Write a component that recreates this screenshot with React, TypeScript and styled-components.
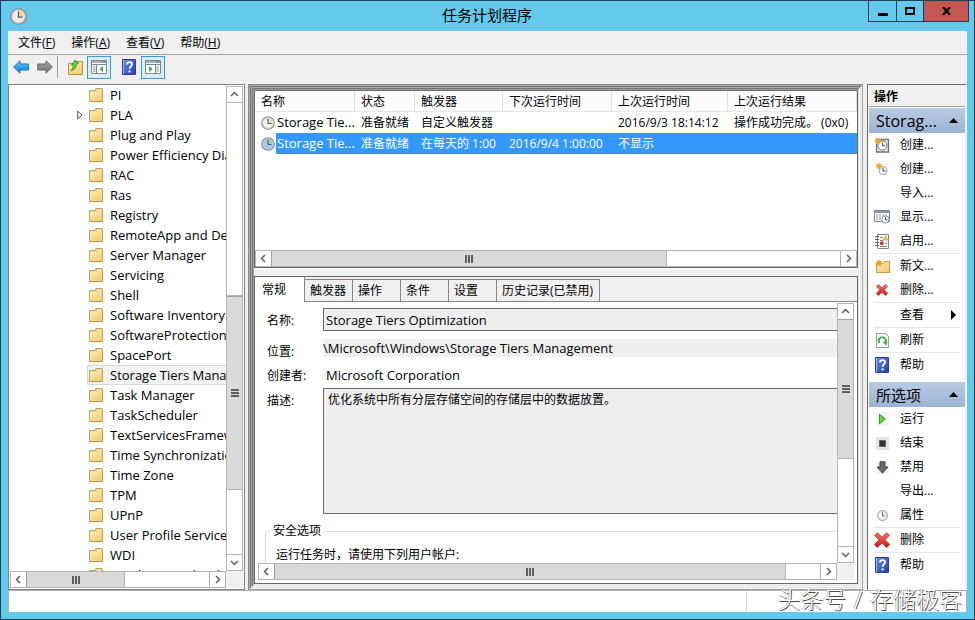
import React from "react";
import styled, { createGlobalStyle, css } from "styled-components";

const GlobalStyle = createGlobalStyle`
  *, *::before, *::after { box-sizing: border-box; }
  body {
    margin: 0;
    color: #000;
    font: 12px/18px "Open Sans", "Noto Sans CJK SC", sans-serif;
  }
  button, input, textarea { font: inherit; color: inherit; margin: 0; padding: 0; border: 0; border-radius: 0; background: none; }
  ul { list-style: none; margin: 0; padding: 0; }
  svg { display: block; flex: none; }
`;

/* ---------- window ---------- */

const Window = styled.div`
  position: relative;
  display: flex;
  flex-direction: column;
  height: 100vh;
  min-height: 480px;
  padding: 0 7px 7px;
  border: 1px solid #1f4058;
  background: #64c9ea;
  overflow: hidden;
`;

const TitleBar = styled.header`
  display: grid;
  grid-template-columns: 100px 1fr 100px;
  flex: none;
  height: 30px;
  align-items: center;
  margin-right: -2px;
`;

const TitleIcon = styled.span`
  padding-left: 2px;
`;

const Title = styled.h1`
  margin: 0;
  padding-right: 3px;
  text-align: center;
  font-size: 15px;
  line-height: 26px;
  height: 28px;
  font-weight: 400;
`;

const CaptionButtons = styled.div`
  display: flex;
  align-self: start;
  justify-self: end;
  border: 1px solid #1f4058;
  border-top: 0;
`;

const CaptionButton = styled.button<{ $close?: boolean }>`
  display: flex;
  align-items: center;
  justify-content: center;
  width: ${(p) => (p.$close ? 45 : 27)}px;
  height: 20px;
  background: ${(p) => (p.$close ? "#c4574f" : "transparent")};
  & + & { border-left: 1px solid #1f4058; }
`;

const Client = styled.div`
  display: flex;
  flex-direction: column;
  flex: 1;
  min-height: 0;
  background: #f0f0f0;
`;

const MenuBar = styled.nav`
  display: flex;
  flex: none;
  height: 24px;
  padding-left: 2px;
  border-bottom: 1px solid #a8a8a8;
`;

const MenuItem = styled.button`
  padding: 1px 8px 0;
  line-height: 22px;
`;

const ToolBar = styled.div`
  display: flex;
  flex: none;
  align-items: center;
  height: 29px;
  padding: 0 0 5px 1px;
`;

const ToolButton = styled.button<{ $on?: boolean }>`
  display: flex;
  align-items: center;
  justify-content: center;
  width: 24px;
  height: 23px;
  ${(p) => p.$on && css`border: 1px solid #3a9bdc; background: #dcedfa;`}
`;

const ToolDivider = styled.span<{ $hidden?: boolean }>`
  width: 1px;
  height: 22px;
  margin: 0 5px 0 0;
  background: ${(p) => (p.$hidden ? "transparent" : "#a0a0a0")};
`;

const Main = styled.main`
  display: flex;
  flex: 1;
  min-height: 0;
`;

/* ---------- scroll bars ---------- */

const Bar = styled.div<{ $v?: boolean }>`
  display: flex;
  flex: none;
  flex-direction: ${(p) => (p.$v ? "column" : "row")};
  ${(p) => (p.$v ? "width: 17px;" : "height: 17px;")}
  background: #fff;
  border: 1px solid #b4b4b4;
`;

const BarButton = styled.button`
  display: flex;
  flex: none;
  align-items: center;
  justify-content: center;
  width: 15px;
  height: 15px;
`;

const BarSpace = styled.span<{ $grow: number; $v?: boolean }>`
  flex: ${(p) => p.$grow} 1 0;
  border: 0 solid #b4b4b4;
  ${(p) => p.$grow > 0 && (p.$v ? "border-width: 1px 0;" : "border-width: 0 1px;")}
`;

const BarThumb = styled.span<{ $grow: number; $v?: boolean }>`
  display: flex;
  flex: ${(p) => p.$grow} 1 0;
  align-items: center;
  justify-content: center;
  background: #dadada;
  border: 0 solid #a0a0a0;
  border-width: ${(p) => (p.$v ? "1px 0 0" : "0 0 0 1px")};
`;

const chevrons = {
  up: "M1 6 4.5 2.5 8 6",
  down: "M1 3 4.5 6.5 8 3",
  left: "M6 1 2.5 4.5 6 8",
  right: "M3 1 6.5 4.5 3 8",
};

function Chevron({ dir }: { dir: keyof typeof chevrons }) {
  return (
    <svg width="9" height="9" viewBox="0 0 9 9">
      <path d={chevrons[dir]} fill="none" stroke="#606060" strokeWidth="1.5" />
    </svg>
  );
}

type ScrollProps = { vertical?: boolean; before: number; thumb: number; after: number };

function ScrollBar({ vertical, before, thumb, after }: ScrollProps) {
  return (
    <Bar $v={vertical}>
      <BarButton aria-label={vertical ? "向上滚动" : "向左滚动"}>
        <Chevron dir={vertical ? "up" : "left"} />
      </BarButton>
      <BarSpace $grow={before} $v={vertical} />
      <BarThumb $grow={thumb} $v={vertical}>
        <svg width="8" height="8" viewBox="0 0 8 8">
          <path
            d={vertical ? "M0 1H8M0 4H8M0 7H8" : "M1 0V8M4 0V8M7 0V8"}
            stroke="#606060"
            strokeWidth="2"
          />
        </svg>
      </BarThumb>
      <BarSpace $grow={after} $v={vertical} />
      <BarButton aria-label={vertical ? "向下滚动" : "向右滚动"}>
        <Chevron dir={vertical ? "down" : "right"} />
      </BarButton>
    </Bar>
  );
}

/* ---------- tree ---------- */

const TreePane = styled.section`
  display: grid;
  grid-template: minmax(0, 1fr) 17px / minmax(0, 1fr) 17px;
  flex: none;
  width: 237px;
  padding: 0 1px 1px;
  border: 1px solid #808080;
  background: #fff;
  margin-right: 3px;
`;

const TreeView = styled.ul`
  overflow: hidden;
`;

const BarFrame = styled.div`
  display: grid;
  padding-top: 1px;
`;

const Corner = styled.span`
  background: #f0f0f0;
`;

const TreeRow = styled.li`
  display: flex;
  align-items: center;
  height: 20px;
  padding-left: 67px;
`;

const Expander = styled.span`
  display: flex;
  flex: none;
  width: 10px;
`;

const TreeNode = styled.button<{ $selected?: boolean }>`
  display: flex;
  flex: 1 0 auto;
  align-items: center;
  gap: 7px;
  height: 20px;
  padding-left: 1px;
  border: 1px solid transparent;
  font-size: 13px;
  white-space: nowrap;
  ${(p) => p.$selected && css`border-color: #d9d9d9; background: #f2f2f2;`}
`;

/* ---------- centre ---------- */

const CentreFrame = styled.section`
  display: flex;
  flex: 1;
  flex-direction: column;
  min-width: 0;
  padding: 6px 5px 6px 6px;
  background: #f0f0f0;
  box-shadow:
    inset 1px 1px #8c8c8c, inset -1px -1px #a0a0a0,
    inset 2px 2px #a8a8a8, inset -2px -2px #fafafa,
    inset 3px 3px #757575, inset -3px -3px #e0e0e0,
    inset 4px 4px #a8a8a8, inset -4px -4px #fafafa,
    inset 5px 5px #757575, inset -5px -5px #e0e0e0,
    inset 6px 6px #a0a0a0;
  margin-right: 4px;
`;

const ListPane = styled.div`
  display: flex;
  flex: none;
  flex-direction: column;
  height: 178px;
  border: 1px solid #696969;
  background: #fff;
`;

const ListBody = styled.div`
  flex: 1;
  overflow: hidden;
`;

const Table = styled.table`
  width: 100%;
  table-layout: fixed;
  border-collapse: separate;
  border-spacing: 0;
  white-space: nowrap;
`;

const Th = styled.th<{ $w?: number }>`
  width: ${(p) => (p.$w ? p.$w + "px" : "auto")};
  height: 21px;
  padding: 1px 0 0 6px;
  border-right: 1px solid #dedede;
  border-bottom: 1px solid #e8e8e8;
  background: #fcfcfc;
  font-weight: 400;
  text-align: left;
`;

const Tr = styled.tr<{ $selected?: boolean }>`
  --row: ${(p) => (p.$selected ? "#3399ff" : "transparent")};
  --line: ${(p) => (p.$selected ? "#5c83ad" : "transparent")};
  color: ${(p) => (p.$selected ? "#fff" : "#000")};
`;

const Td = styled.td`
  height: 21px;
  padding: 0 0 0 6px;
  overflow: hidden;
  background: var(--row);
  box-shadow: inset 0 -1px var(--line);
`;

const NameTd = styled.td`
  height: 21px;
  padding: 0 0 0 6px;
  font-size: 13px;
`;

const NameCell = styled.span`
  display: flex;
  align-items: center;
`;

const NameText = styled.span`
  flex: 1;
  margin-left: 1px;
  padding-left: 1px;
  line-height: 21px;
  background: var(--row);
  box-shadow: inset 0 -1px var(--line);
`;

const PaneGap = styled.div`
  flex: none;
  height: 8px;
  border-top: 2px solid #fafafa;
`;

const DetailPane = styled.div`
  display: flex;
  flex: 1;
  flex-direction: column;
  min-height: 0;
  border: 1px solid #696969;
  background: #fff;
`;

const TabStrip = styled.div`
  display: flex;
  flex: none;
  align-items: flex-end;
  height: 25px;
  background: #f0f0f0;
  box-shadow: inset 0 -1px #84848c;
`;

const Tab = styled.button<{ $active?: boolean }>`
  min-width: 48px;
  height: ${(p) => (p.$active ? 25 : 23)}px;
  padding: 0 6px 0 5px;
  border: 1px solid #84848c;
  border-left: 0;
  text-align: left;
  white-space: nowrap;
  ${(p) => p.$active && css`
    min-width: 50px;
    padding-left: 7px;
    border-width: 0 1px 0 0;
    background: #fff;
  `}
`;

const DetailGrid = styled.div`
  display: grid;
  grid-template: minmax(0, 1fr) 17px / minmax(0, 1fr) 17px;
  flex: 1;
  min-height: 0;
  padding: 0 3px 3px 3px;
`;

const DetailView = styled.div`
  overflow: hidden;
  margin-left: -3px;
`;

const FormCanvas = styled.div`
  width: calc(100% + 24px);
`;

const FormGrid = styled.div`
  display: grid;
  grid-template-columns: 56px minmax(0, 1fr);
  grid-template-rows: 31px 24px 25px 126px;
  align-items: start;
  padding: 6px 0 0 12px;
`;

const Label = styled.label`
  line-height: 25px;
`;

const NameInput = styled.input`
  height: 23px;
  padding-left: 2px;
  border: 1px solid #696969;
  background: #efefef;
  font-size: 13px;
`;

const PathInput = styled.input`
  height: 18px;
  background: #efefef;
  font-size: 13px;
`;

const Creator = styled.output`
  padding-left: 3px;
  font-size: 13px;
  line-height: 24px;
`;

const Description = styled.textarea`
  height: 126px;
  padding: 2px 4px;
  border: 1px solid #696969;
  background: #efefef;
  resize: none;
`;

const SecurityBox = styled.fieldset`
  min-height: 70px;
  margin: 8px 0 0 10px;
  padding: 6px 0 0 10px;
  border: 1px solid #dcdcdc;
`;

const Legend = styled.legend`
  margin-left: -6px;
  padding: 0 3px;
`;

/* ---------- actions ---------- */

const ActionPane = styled.aside`
  flex: none;
  width: 100px;
  padding-left: 1px;
  border: solid #696969;
  border-width: 1px 0 0 1px;
  border-right: 2px solid #f0f0f0;
  background: #fff;
  overflow: hidden;
`;

const ActionTitle = styled.h2`
  margin: 0 0 1px;
  padding-left: 5px;
  height: 22px;
  border-bottom: 1px solid #a0a0a0;
  background: #f0f0f0;
  font-size: 12px;
  line-height: 23px;
  font-weight: 700;
`;

const GroupHeader = styled.button<{ $han?: boolean }>`
  display: flex;
  align-items: center;
  justify-content: space-between;
  width: 100%;
  height: 25px;
  padding: 0 7px;
  background: linear-gradient(#b9cbe3, #9bb3d4);
  font-size: ${(p) => (p.$han ? 15 : 16)}px;
`;

const ActionList = styled.ul`
  padding: 0 5px;
  & + ${GroupHeader} { margin-top: 5px; }
`;

const ActionItem = styled.li<{ $line?: boolean }>`
  border-top: ${(p) => (p.$line ? "1px solid #e6e6e6" : "0")};
`;

const ActionButton = styled.button`
  display: grid;
  grid-template-columns: 26px 1fr auto;
  align-items: center;
  width: 100%;
  height: 24px;
  text-align: left;
`;

/* ---------- status ---------- */

const StatusBar = styled.footer`
  display: flex;
  flex: none;
  justify-content: flex-end;
  height: 22px;
  border: 1px solid #b0b0b0;
  border-bottom: 0;
  background: #fff;
`;

const StatusCell = styled.span`
  width: 220px;
  border-left: 1px solid #d7d7d7;
`;

const Watermark = styled.div`
  position: absolute;
  right: 12px;
  bottom: 4px;
  display: flex;
  gap: 8px;
  color: #fff;
  font-size: 23px;
  line-height: 32px;
  font-weight: 300;
  white-space: nowrap;
  text-shadow: 1px 1px 0 #4c4c4c, -1px 0 0 #b4b4b4;
`;

/* ---------- icons ---------- */

function Gradients() {
  return (
    <svg width="0" height="0" aria-hidden="true">
      <defs>
        <linearGradient id="g-folder" x1="0" y1="0" x2="1" y2="1">
          <stop offset="0" stopColor="#fdefbd" />
          <stop offset="1" stopColor="#f2c968" />
        </linearGradient>
        <linearGradient id="g-help" x1="0" y1="0" x2="1" y2="1">
          <stop offset="0" stopColor="#6d8fe6" />
          <stop offset="1" stopColor="#2440a8" />
        </linearGradient>
        <linearGradient id="g-back" x1="0" y1="0" x2="0" y2="1">
          <stop offset="0" stopColor="#8fd6fa" />
          <stop offset="0.5" stopColor="#2fa3ec" />
          <stop offset="1" stopColor="#1a7fd0" />
        </linearGradient>
        <linearGradient id="g-dark" x1="0" y1="0" x2="0" y2="1">
          <stop offset="0" stopColor="#a8a8a8" />
          <stop offset="1" stopColor="#6c6c6c" />
        </linearGradient>
        <linearGradient id="g-red" x1="0" y1="0" x2="0" y2="1">
          <stop offset="0" stopColor="#f47a70" />
          <stop offset="1" stopColor="#cf1414" />
        </linearGradient>
      </defs>
    </svg>
  );
}

function Clock({ size = 14, face = "#f3f2ee", wedge = "#f3d9a0" }: { size?: number; face?: string; wedge?: string }) {
  return (
    <svg width={size} height={size} viewBox="0 0 16 16">
      <circle cx="8" cy="8" r="7.2" fill={face} stroke="#85878b" strokeWidth="1.2" />
      <circle cx="8" cy="8" r="5.9" fill="none" stroke="#c9ccd0" strokeWidth="0.9" />
      <path d="M8 8V2.6A5.4 5.4 0 0 1 13.4 8Z" fill={wedge} />
      <path d="M8 3V8.5H12" fill="none" stroke="#4b5a70" strokeWidth="1.2" />
    </svg>
  );
}

function Folder() {
  return (
    <svg width="14" height="14" viewBox="0 0 14 14">
      <path d="M.5 2.5H6L7 .5H13L13.5 1.5V13.5H.5Z" fill="#ecc872" stroke="#bda063" />
      <path d="M8 2H12.5" stroke="#fff8dc" />
      <path d="M1 3.5H7.5L8.5 2.8H13V13H1Z" fill="url(#g-folder)" />
      <path d="M.5 13.5H13.5" stroke="#b8934a" />
    </svg>
  );
}

function BackArrow() {
  return (
    <svg width="16" height="14" viewBox="0 0 16 14">
      <path d="M.7 7 7 .8V4H15.3V10H7V13.2Z" fill="url(#g-back)" stroke="#1d6fb3" />
    </svg>
  );
}

function ForwardArrow() {
  return (
    <svg width="16" height="14" viewBox="0 0 16 14">
      <path d="M15.3 7 9 .8V4H.7V10H9V13.2Z" fill="url(#g-dark)" stroke="#686868" />
    </svg>
  );
}

function FolderUp() {
  return (
    <svg width="15" height="16" viewBox="0 0 15 16">
      <path d="M.5 4.5H7L8.5 2.5H14.5V15.5H.5Z" fill="url(#g-folder)" stroke="#b8923f" />
      <path d="M2.5 12C4 10.5 5.2 8.5 5.2 6.2H3.2L7.2 1 10.8 4.6H8.8C8.6 8.5 6.5 11.5 2.5 12Z" fill="#5cc83c" stroke="#2f8f22" strokeWidth="0.7" />
    </svg>
  );
}

function PanelIcon({ side }: { side: "left" | "right" }) {
  const left = side === "left";
  return (
    <svg width="16" height="14" viewBox="0 0 16 14">
      <path d="M.5.5H15.5V13.5H.5Z" fill="#fff" stroke="#7d8792" />
      <path d="M1 2H15" stroke="#a9b2bc" strokeWidth="2" />
      <path d="M11 1.8H12M13 1.8H14" stroke="#444" />
      <path d="M1 4.5H15" stroke="#7d8792" />
      {left ? (
        <>
          <path d="M5.5 5V13M2 7H4.5M2 9H4.5M2 11H4.5" stroke="#7d8792" />
          <path d="M12 6V12L8.5 9Z" fill="#3cab3a" />
        </>
      ) : (
        <>
          <path d="M10.5 5V13M11.5 7H14M11.5 9H14M11.5 11H14" stroke="#7d8792" />
          <path d="M4 6V12L7.5 9Z" fill="#3cab3a" />
        </>
      )}
    </svg>
  );
}

function Help() {
  return (
    <svg width="14" height="16" viewBox="0 0 14 16">
      <path d="M.5.5H13.5V15.5H.5Z" fill="url(#g-help)" stroke="#2a3f94" />
      <path d="M1.5 1V15" stroke="#9db4f2" />
      <path d="M5 5.4C5 2.3 10 2.3 10 5.2 10 7.2 7.6 7.4 7.6 9.8" fill="none" stroke="#fff" strokeWidth="1.8" />
      <circle cx="7.6" cy="12.4" r="1.1" fill="#fff" />
    </svg>
  );
}

const star = "M4 0 4.9 2.4 7.3 1.4 6 3.7 8 5 5.6 5.4 5.6 7.8 4 6 2 7.6 2.3 5.2 0 4.6 2 3.4 1 1.2 3.2 2.3Z";

function NewTask() {
  return (
    <svg width="16" height="16" viewBox="0 0 16 16">
      <path d="M2.5 2.5H14.5V15H2.5Z" fill="#e8eaec" stroke="#6f7478" strokeWidth="1.3" />
      <circle cx="8.5" cy="8.5" r="4.6" fill="#fafafa" stroke="#6f7478" />
      <path d="M8.5 5.5V8.8H11.3" fill="none" stroke="#3c4c60" />
      <path d={star} fill="#f7a21b" />
    </svg>
  );
}

function BasicTask() {
  return (
    <svg width="14" height="14" viewBox="0 0 14 14">
      <circle cx="8" cy="8.5" r="4" fill="#f5f8fb" stroke="#8fa6bd" />
      <path d="M8 6V9H10.5" fill="none" stroke="#3c4c60" />
      <path d={star} fill="#f7a21b" />
    </svg>
  );
}

function ShowRunning() {
  return (
    <svg width="16" height="14" viewBox="0 0 16 14">
      <path d="M.5.5H15.5V11.5H.5Z" fill="#fff" stroke="#7d8792" />
      <path d="M1 2H15" stroke="#8e98a4" strokeWidth="2" />
      <path d="M2 5H14M2 7H8M2 9H8" stroke="#8794a4" strokeDasharray="2 1" />
      <circle cx="11.5" cy="9.5" r="3.7" fill="#f2f5f7" stroke="#8a8f96" />
      <path d="M11.5 7V9.8H13.5" fill="none" stroke="#455" />
    </svg>
  );
}

function History() {
  return (
    <svg width="14" height="15" viewBox="0 0 14 15">
      <path d="M2.5.5H13.5V14.5H2.5Z" fill="#fdfdfd" stroke="#84868c" />
      <path d="M0 2.5H4M0 5.5H4M0 8.5H4M0 11.5H4" stroke="#555c68" />
      <path d="M5 3.5H8M5 6.5H8M5 12.5H12M10 9.5H12" stroke="#6d86b5" />
      <path d="M10.5 1.8 13 6H8Z" fill="#f4cf2c" stroke="#b99413" strokeWidth="0.5" />
      <circle cx="6.8" cy="9.3" r="2" fill="#d8302a" />
    </svg>
  );
}

function NewFolder() {
  return (
    <svg width="15" height="14" viewBox="0 0 15 14">
      <path d="M1.5 4.5H8L9.5 2.5H14.5V13.5H1.5Z" fill="url(#g-folder)" stroke="#c99b3c" />
      <path d={star} fill="#f59d16" />
    </svg>
  );
}

function Cross({ big }: { big?: boolean }) {
  const size = big ? 16 : 12;
  return (
    <svg width={size} height={size} viewBox="0 0 16 16">
      <path
        d="M3.4.8 8 5.2 12.6.8 15.4 3.2 11 7.8 15.6 12.6 12.6 15.4 8 11 3.2 15.4.4 12.6 5 7.8.6 3.4Z"
        fill="url(#g-red)"
        stroke="#b51a1a"
        strokeWidth="0.8"
      />
    </svg>
  );
}

function Refresh() {
  return (
    <svg width="13" height="15" viewBox="0 0 13 15">
      <path d="M.5.5H9.5L12.5 3.5V14.5H.5Z" fill="#f7faf6" stroke="#9a9fa2" />
      <path d="M3.4 10A3.6 3.6 0 1 1 9.6 9.4" fill="none" stroke="#45ae45" strokeWidth="1.8" />
      <path d="M6.5 9 11.5 8.5 10.5 12.8Z" fill="#45ae45" />
    </svg>
  );
}

function Play() {
  return (
    <svg width="13" height="14" viewBox="0 0 13 14">
      <path d="M0 0H13V14H0Z" fill="#f3f5f2" />
      <path d="M3.5 2.2 9.3 7 3.5 11.8Z" fill="#6cd54c" stroke="#2f9a28" />
    </svg>
  );
}

function Stop() {
  return (
    <svg width="13" height="13" viewBox="0 0 13 13">
      <path d="M0 0H13V13H0Z" fill="#e4e4e4" />
      <path d="M3.5 3.5H9.5V9.5H3.5Z" fill="#333" stroke="#666" />
    </svg>
  );
}

function Disable() {
  return (
    <svg width="13" height="13" viewBox="0 0 13 13">
      <path d="M0 0H13V13H0Z" fill="#f4f4f4" />
      <path d="M4 .8H9V6H12L6.5 12.2 1 6H4Z" fill="#666" stroke="#454545" />
    </svg>
  );
}

/* ---------- data ---------- */

const menus = [["文件", "F"], ["操作", "A"], ["查看", "V"], ["帮助", "H"]];

const treeNodes = [
  "PI", "PLA", "Plug and Play", "Power Efficiency Diagnostics", "RAC", "Ras", "Registry",
  "RemoteApp and Desktop Connections Update", "Server Manager", "Servicing", "Shell",
  "Software Inventory Logging", "SoftwareProtectionPlatform", "SpacePort",
  "Storage Tiers Management", "Task Manager", "TaskScheduler", "TextServicesFramework",
  "Time Synchronization", "Time Zone", "TPM", "UPnP", "User Profile Service", "WDI",
  "Windows Media Sharing",
];

type Action = { text: string; icon?: React.ReactNode; line?: boolean; more?: boolean };

const folderActions: Action[] = [
  { text: "创建...", icon: <NewTask /> },
  { text: "创建...", icon: <BasicTask /> },
  { text: "导入..." },
  { text: "显示...", icon: <ShowRunning /> },
  { text: "启用...", icon: <History /> },
  { text: "新文...", icon: <NewFolder />, line: true },
  { text: "删除...", icon: <Cross /> },
  { text: "查看", line: true, more: true },
  { text: "刷新", icon: <Refresh />, line: true },
  { text: "帮助", icon: <Help />, line: true },
];

const itemActions: Action[] = [
  { text: "运行", icon: <Play /> },
  { text: "结束", icon: <Stop /> },
  { text: "禁用", icon: <Disable /> },
  { text: "导出..." },
  { text: "属性", icon: <Clock size={11} face="#f2f7fc" wedge="#f6ecc0" /> },
  { text: "删除", icon: <Cross big />, line: true },
  { text: "帮助", icon: <Help />, line: true },
];

const IconSlot = styled.span`
  display: flex;
  justify-content: center;
  width: 16px;
`;

function ActionGroup({ title, han, actions }: { title: string; han?: boolean; actions: Action[] }) {
  return (
    <>
      <GroupHeader $han={han} aria-expanded="true">
        {title}
        <svg width="9" height="5" viewBox="0 0 9 5"><path d="M4.5 0 9 5H0Z" /></svg>
      </GroupHeader>
      <ActionList>
        {actions.map((a, i) => (
          <ActionItem key={i} $line={a.line}>
            <ActionButton>
              <IconSlot>{a.icon}</IconSlot>
              {a.text}
              {a.more && <svg width="9" height="10" viewBox="0 0 9 10"><path d="M0 0 5 5 0 10Z" /></svg>}
            </ActionButton>
          </ActionItem>
        ))}
      </ActionList>
    </>
  );
}

export default function App() {
  return (
    <Window>
      <GlobalStyle />
      <TitleBar>
        <TitleIcon><Clock size={17} face="#f6efe0" /></TitleIcon>
        <Title>任务计划程序</Title>
        <CaptionButtons>
          <CaptionButton aria-label="最小化">
            <svg width="10" height="10" viewBox="0 0 10 10"><path d="M0 7H10V10H0Z" /></svg>
          </CaptionButton>
          <CaptionButton aria-label="最大化">
            <svg width="10" height="8" viewBox="0 0 10 8"><path d="M1 1H9V7H1Z" fill="none" stroke="#000" strokeWidth="2" /></svg>
          </CaptionButton>
          <CaptionButton $close aria-label="关闭">
            <svg width="9" height="8" viewBox="0 0 9 8"><path d="M1 0 8 8M8 0 1 8" stroke="#000" strokeWidth="2.2" /></svg>
          </CaptionButton>
        </CaptionButtons>
      </TitleBar>
      <Client>
        <MenuBar>
          {menus.map(([name, key]) => (
            <MenuItem key={key}>{name}(<u>{key}</u>)</MenuItem>
          ))}
        </MenuBar>
        <ToolBar>
          <ToolButton aria-label="后退"><BackArrow /></ToolButton>
          <ToolButton aria-label="前进"><ForwardArrow /></ToolButton>
          <ToolDivider />
          <ToolButton aria-label="向上"><FolderUp /></ToolButton>
          <ToolButton $on aria-label="显示/隐藏控制台树"><PanelIcon side="left" /></ToolButton>
          <ToolDivider $hidden />
          <ToolButton aria-label="帮助"><Help /></ToolButton>
          <ToolButton $on aria-label="显示/隐藏操作窗格"><PanelIcon side="right" /></ToolButton>
        </ToolBar>
        <Main>
          <TreePane>
            <TreeView>
              {treeNodes.map((name) => (
                <TreeRow key={name}>
                  <Expander>
                    {name === "PLA" && (
                      <svg width="6" height="10" viewBox="0 0 6 10"><path d="M.7 1.2V8.8L5 5Z" fill="#fff" stroke="#555" /></svg>
                    )}
                  </Expander>
                  <TreeNode $selected={name === "Storage Tiers Management"}>
                    <Folder />
                    {name}
                  </TreeNode>
                </TreeRow>
              ))}
            </TreeView>
            <BarFrame><ScrollBar vertical before={194} thumb={193} after={65} /></BarFrame>
            <ScrollBar before={0} thumb={98} after={84} />
            <Corner />
          </TreePane>

          <CentreFrame>
            <ListPane>
              <ListBody>
                <Table>
                  <thead>
                    <tr>
                      <Th $w={100}>名称</Th>
                      <Th $w={60}>状态</Th>
                      <Th $w={88}>触发器</Th>
                      <Th $w={109}>下次运行时间</Th>
                      <Th $w={116}>上次运行时间</Th>
                      <Th>上次运行结果</Th>
                    </tr>
                  </thead>
                  <tbody>
                    <Tr>
                      <NameTd><NameCell><Clock /><NameText>Storage Tie...</NameText></NameCell></NameTd>
                      <Td>准备就绪</Td>
                      <Td>自定义触发器</Td>
                      <Td />
                      <Td>2016/9/3 18:14:12</Td>
                      <Td>操作成功完成。 (0x0)</Td>
                    </Tr>
                    <Tr $selected>
                      <NameTd><NameCell><Clock face="#a9c9ea" wedge="#a8cdb8" /><NameText>Storage Tie...</NameText></NameCell></NameTd>
                      <Td>准备就绪</Td>
                      <Td>在每天的 1:00</Td>
                      <Td>2016/9/4 1:00:00</Td>
                      <Td>不显示</Td>
                      <Td />
                    </Tr>
                  </tbody>
                </Table>
              </ListBody>
              <ScrollBar before={0} thumb={395} after={174} />
            </ListPane>
            <PaneGap />
            <DetailPane>
              <TabStrip role="tablist">
                <Tab role="tab" aria-selected="true" $active>常规</Tab>
                <Tab role="tab">触发器</Tab>
                <Tab role="tab">操作</Tab>
                <Tab role="tab">条件</Tab>
                <Tab role="tab">设置</Tab>
                <Tab role="tab">历史记录(已禁用)</Tab>
              </TabStrip>
              <DetailGrid>
                <DetailView>
                  <FormCanvas>
                    <FormGrid>
                      <Label htmlFor="task-name">名称:</Label>
                      <NameInput id="task-name" readOnly defaultValue="Storage Tiers Optimization" />
                      <Label htmlFor="task-path">位置:</Label>
                      <PathInput id="task-path" readOnly defaultValue="\Microsoft\Windows\Storage Tiers Management" />
                      <Label htmlFor="task-author">创建者:</Label>
                      <Creator id="task-author">Microsoft Corporation</Creator>
                      <Label htmlFor="task-text">描述:</Label>
                      <Description id="task-text" readOnly defaultValue="优化系统中所有分层存储空间的存储层中的数据放置。" />
                    </FormGrid>
                    <SecurityBox>
                      <Legend>安全选项</Legend>
                      运行任务时，请使用下列用户帐户:
                    </SecurityBox>
                  </FormCanvas>
                </DetailView>
                <BarFrame><ScrollBar vertical before={0} thumb={139} after={88} /></BarFrame>
                <ScrollBar before={0} thumb={512} after={34} />
                <Corner />
              </DetailGrid>
            </DetailPane>
          </CentreFrame>

          <ActionPane>
            <ActionTitle>操作</ActionTitle>
            <ActionGroup title="Storag..." actions={folderActions} />
            <ActionGroup title="所选项" han actions={itemActions} />
          </ActionPane>
        </Main>
        <StatusBar><StatusCell /></StatusBar>
      </Client>
      <Watermark><span>头条号</span><span>/</span><span>存储极客</span></Watermark>
      <Gradients />
    </Window>
  );
}
